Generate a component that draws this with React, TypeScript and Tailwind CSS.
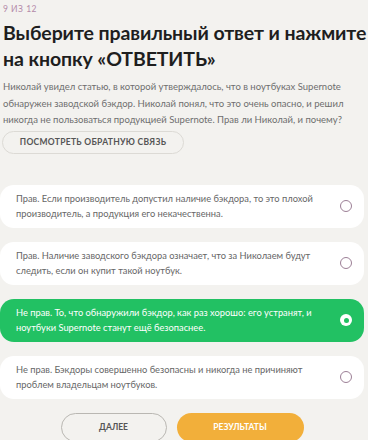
import React, { useState } from "react";

const options = [
  "Прав. Если производитель допустил наличие бэкдора, то это плохой производитель, а продукция его некачественна.",
  "Прав. Наличие заводского бэкдора означает, что за Николаем будут следить, если он купит такой ноутбук.",
  "Не прав. То, что обнаружили бэкдор, как раз хорошо: его устранят, и ноутбуки Supernote станут ещё безопаснее.",
  "Не прав. Бэкдоры совершенно безопасны и никогда не причиняют проблем владельцам ноутбуков.",
];

const App = () => {
  const [selected, setSelected] = useState(2);
  return (
    <div className="w-[368px] h-[440px] overflow-hidden bg-[#f3f2ef] font-['Lato',sans-serif] text-[#222]">
      <div className="pl-[3px] pt-[3px] text-[8.5px] tracking-[0.5px] text-[#b48aa9] leading-[12px]">
        9 ИЗ 12
      </div>
      <h1 className="pl-[3px] pt-[5px] text-[19.5px] font-bold leading-[26px] tracking-[-0.1px] text-[#1e1e1e]">
        Выберите правильный ответ и нажмите на кнопку «ОТВЕТИТЬ»
      </h1>
      <p className="pl-[3px] pr-1 pt-[7px] text-[9.5px] leading-[16.5px] text-[#6e6e6e]">
        Николай увидел статью, в которой утверждалось, что в ноутбуках Supernote
        обнаружен заводской бэкдор. Николай понял, что это очень опасно, и решил
        никогда не пользоваться продукцией Supernote. Прав ли Николай, и почему?
      </p>
      <button className="ml-[2px] mt-[2px] block h-[23px] w-[182px] rounded-full border border-[#dcdad5] text-[8.5px] font-bold tracking-[0.3px] text-[#555]">
        ПОСМОТРЕТЬ ОБРАТНУЮ СВЯЗЬ
      </button>
      <div className="mt-[31px] flex w-[364px] flex-col gap-[14px]">
        {options.map((opt, i) => {
          const active = i === selected;
          return (
            <div
              key={i}
              onClick={() => setSelected(i)}
              className={`flex h-[43px] cursor-pointer items-center justify-between rounded-[14px] pl-[16px] pr-[12px] ${
                active ? "bg-[#22c163] text-white" : "bg-white text-[#666]"
              }`}
            >
              <p className="w-[310px] text-[9.3px] leading-[15px]">{opt}</p>
              {active ? (
                <div className="flex h-[12px] w-[12px] items-center justify-center rounded-full bg-white">
                  <div className="h-[5px] w-[5px] rounded-full bg-[#22c163]" />
                </div>
              ) : (
                <div className="h-[12px] w-[12px] rounded-full border-[1.5px] border-[#9c7f96]" />
              )}
            </div>
          );
        })}
      </div>
      <div className="mt-[14px] flex justify-center gap-[10px] pr-[4px]">
        <button className="h-[29px] w-[106px] rounded-full border border-[#b9b7b2] text-[8.5px] font-bold text-[#555]">
          ДАЛЕЕ
        </button>
        <button className="h-[29px] w-[127px] rounded-full bg-[#f2af3a] text-[8.5px] font-bold text-white">
          РЕЗУЛЬТАТЫ
        </button>
      </div>
    </div>
  );
};

export default App;
